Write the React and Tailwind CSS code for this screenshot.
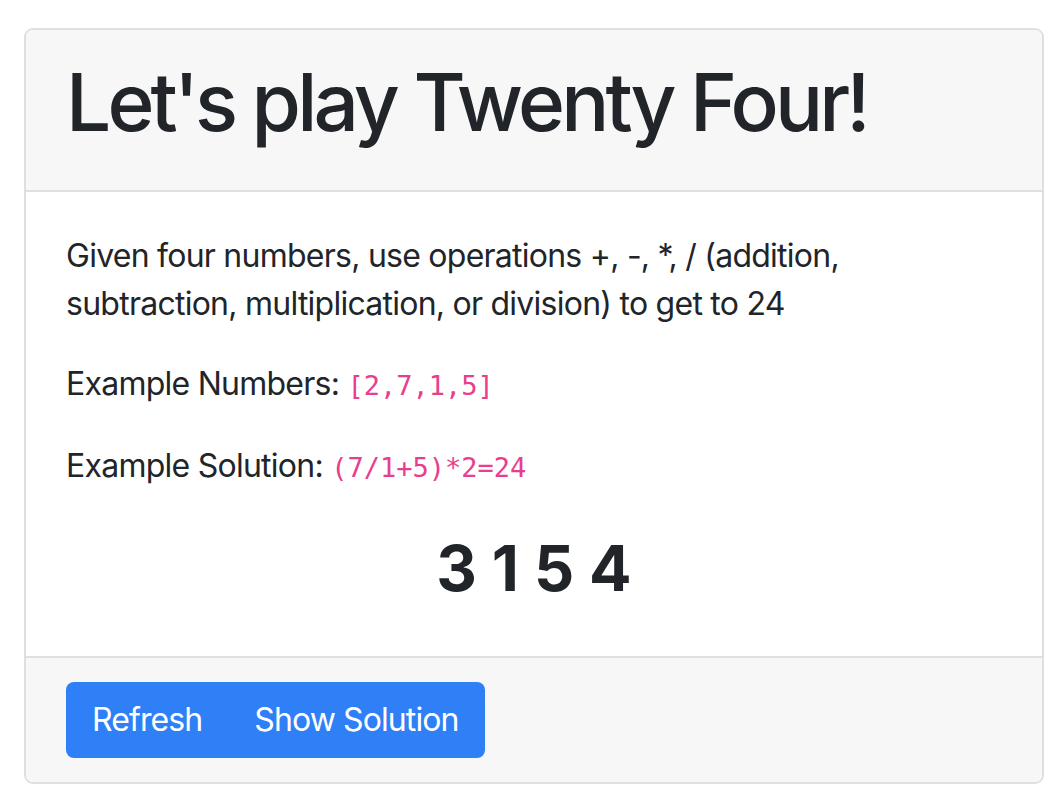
export default function App() {
  const sans = { fontFamily: 'Inter, "Liberation Sans", sans-serif' };
  const mono = { fontFamily: '"DejaVu Sans Mono", monospace' };
  return (
    <div className="bg-white min-h-[812px] pt-[28px] px-[24px]" style={sans}>
      <div className="w-[1020px] border-2 border-[#dfdfdf] rounded-[9px] overflow-hidden text-[#212529]">
        <div className="bg-[#f7f7f7] border-b-2 border-[#dfdfdf] px-[40px] pt-[24px] pb-[40px]">
          <h1 className="text-[80px] leading-[96px] font-medium tracking-[-3.85px]">Let's play Twenty Four!</h1>
        </div>
        <div className="bg-white px-[40px] pt-[40px] pb-[39px]">
          <p className="text-[32px] leading-[48px] mb-[32px] tracking-[-0.75px]">
            Given four numbers, use operations +, -, *, / (addition,
            <br />
            subtraction, multiplication, or division) to get to 24
          </p>
          <p className="text-[32px] leading-[48px] mb-[32px] tracking-[-0.75px]">
            Example Numbers:{' '}
            <code className="text-[#e83e8c] text-[27px] tracking-normal" style={mono}>[2,7,1,5]</code>
          </p>
          <p className="text-[32px] leading-[48px] mb-[32px] tracking-[-0.75px]">
            Example Solution:{' '}
            <code className="text-[#e83e8c] text-[27px] tracking-normal" style={mono}>(7/1+5)*2=24</code>
          </p>
          <h2 className="text-[63px] leading-[77px] font-bold text-center pt-[6px] mb-[10px]">3 1 5 4</h2>
        </div>
        <div className="bg-[#f7f7f7] border-t-2 border-[#dfdfdf] px-[40px] py-[24px]">
          <div className="inline-flex rounded-[8px] overflow-hidden bg-[#2f7ff6]">
            <button className="text-white text-[32px] leading-[48px] px-[26px] py-[14px] tracking-[-0.9px]">Refresh</button>
            <button className="text-white text-[32px] leading-[48px] px-[26px] py-[14px] tracking-[-0.9px]">Show Solution</button>
          </div>
        </div>
      </div>
    </div>
  );
}
